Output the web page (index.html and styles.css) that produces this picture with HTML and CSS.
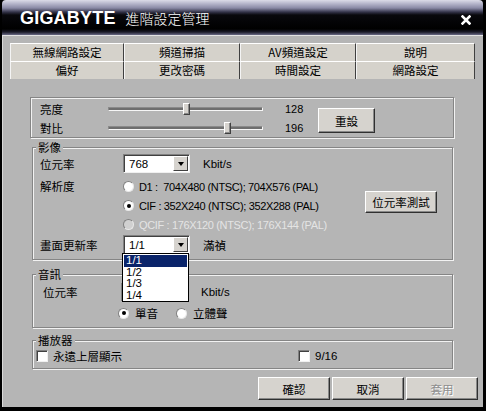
FILE: index.html
```html
<!DOCTYPE html>
<html lang="zh-Hant">
<head>
<meta charset="utf-8">
<title>進階設定管理</title>
<link rel="stylesheet" href="styles.css">
</head>
<body>
<div class="window">
  <div class="titlebar">
    <span class="brand">GIGABYTE</span>
    <span class="title">進階設定管理</span>
    <svg class="close" width="10" height="10" viewBox="0 0 10 10"><path d="M1.5 1.5 L8.5 8.5 M8.5 1.5 L1.5 8.5" stroke="#fff" stroke-width="2.6" stroke-linecap="square"/></svg>
  </div>
  <div class="client">
    <div class="tabs">
      <div class="tabrow back">
        <div class="tab w1">無線網路設定</div>
        <div class="tab w2">頻道掃描</div>
        <div class="tab w3">AV頻道設定</div>
        <div class="tab w4">說明</div>
      </div>
      <div class="tabrow front">
        <div class="tab w1 active">偏好</div>
        <div class="tab w2">更改密碼</div>
        <div class="tab w3">時間設定</div>
        <div class="tab w4">網路設定</div>
      </div>
    </div>

    <div class="page">
      <fieldset class="group adjust">
        <div class="adjust-grid">
          <span class="lbl">亮度</span>
          <div class="slider"><div class="track"></div><div class="thumb" style="left:50.2%"></div></div>
          <span class="val">128</span>
          <div class="btn reset">重設</div>
          <span class="lbl">對比</span>
          <div class="slider"><div class="track"></div><div class="thumb" style="left:76.9%"></div></div>
          <span class="val">196</span>
        </div>
      </fieldset>

      <fieldset class="group video">
        <legend>影像</legend>
        <div class="gbody">
          <div class="row rate">
            <span class="lbl">位元率</span>
            <div class="select"><span class="sel-text">768</span><span class="sel-btn"><i class="tri"></i></span></div>
            <span class="unit">Kbit/s</span>
          </div>
          <div class="res">
            <span class="lbl res-lbl">解析度</span>
            <div class="radios">
              <div class="opt"><span class="radio"></span><span>D1 :&nbsp; 704X480 (NTSC); 704X576 (PAL)</span></div>
              <div class="opt"><span class="radio checked"></span><span>CIF : 352X240 (NTSC); 352X288 (PAL)</span></div>
              <div class="opt disabled"><span class="radio"></span><span>QCIF : 176X120 (NTSC); 176X144 (PAL)</span></div>
            </div>
            <div class="btn test">位元率測試</div>
          </div>
          <div class="row fps">
            <span class="lbl">畫面更新率</span>
            <div class="select open">
              <span class="sel-text">1/1</span><span class="sel-btn"><i class="tri"></i></span>
              <ul class="listbox">
                <li class="hl">1/1</li>
                <li>1/2</li>
                <li>1/3</li>
                <li>1/4</li>
              </ul>
            </div>
            <span class="unit">滿禎</span>
          </div>
        </div>
      </fieldset>

      <fieldset class="group audio">
        <legend>音訊</legend>
        <div class="gbody">
          <div class="row arate">
            <span class="lbl">位元率</span>
            <div class="select"><span class="sel-text"></span><span class="sel-btn"><i class="tri"></i></span></div>
            <span class="unit">Kbit/s</span>
          </div>
          <div class="row mode">
            <div class="opt"><span class="radio checked"></span><span>單音</span></div>
            <div class="opt"><span class="radio"></span><span>立體聲</span></div>
          </div>
        </div>
      </fieldset>

      <fieldset class="group player">
        <legend>播放器</legend>
        <div class="gbody">
          <div class="row checks">
            <div class="opt"><span class="check"></span><span>永遠上層顯示</span></div>
            <div class="opt ratio"><span class="check"></span><span>9/16</span></div>
          </div>
        </div>
      </fieldset>
    </div>

    <div class="actions">
      <div class="btn act">確認</div>
      <div class="btn act">取消</div>
      <div class="btn act dis">套用</div>
    </div>
  </div>
</div>
</body>
</html>
```

FILE: styles.css
```css
* { box-sizing: border-box; }

html, body {
  margin: 0;
  padding: 0;
  background: #000;
}

body {
  font-family: "Liberation Sans", "Noto Sans CJK TC", sans-serif;
  font-size: 11px;
  color: #000;
}

.window {
  width: 486px;
  height: 411px;
  background: #000;
  padding: 0 3px 4px 2px;
  display: flex;
  flex-direction: column;
}

/* ---------- title bar ---------- */
.titlebar {
  height: 35px;
  flex: none;
  display: flex;
  align-items: center;
  padding: 1px 12px 0 18px;
  border-radius: 4px 4px 0 0;
  background: linear-gradient(to bottom,
    #dcdce8 0px, #bcbcd0 3px, #8a8aa6 8px, #34344a 12px,
    #08080c 15px, #000 29px, #1c1c2a 32px, #6a6a86 35px);
}

.brand {
  font-family: "Liberation Sans", sans-serif;
  font-weight: bold;
  font-size: 18px;
  color: #fff;
  letter-spacing: 0.2px;
}

.title {
  margin-left: 10px;
  font-family: "Noto Sans CJK TC", sans-serif;
  font-size: 14px;
  font-weight: 300;
  color: #fff;
}

.close { margin-left: auto; margin-top: 3px; }

/* ---------- client ---------- */
.client {
  flex: 1;
  background: #b5b5b5;
  border-top: 1px solid #e2e2e2;
  border-left: 1px solid #d8d8d8;
  display: flex;
  flex-direction: column;
}

.tabs {
  margin: 7px 0 0 7px;
  width: 465px;
}

.tabrow {
  display: flex;
  height: 18px;
}

.tab {
  background: #d5d2cb;
  border-top: 1px solid #fff;
  border-left: 1px solid #f4f4f4;
  border-right: 1px solid #404040;
  font-family: "Noto Sans CJK TC", sans-serif;
  font-size: 11.5px;
  line-height: 16px;
  text-align: center;
}

.w1 { width: 114px; }
.w2 { width: 116px; }
.w3 { width: 116px; }
.w4 { width: 119px; }

/* ---------- page ---------- */
.page {
  display: flex;
  flex-direction: column;
}

.lbl, .unit, legend, .btn {
  font-family: "Noto Sans CJK TC", sans-serif;
  font-size: 11.5px;
}

.group {
  margin: 0;
  padding: 0;
  min-width: 0;
  border: 1px solid #858585;
  box-shadow: 1px 1px 0 #f2f2f2, inset 1px 1px 0 #f2f2f2;
}

legend {
  padding: 0 2px;
  margin-left: 3px;
  line-height: 12px;
  background: #b5b5b5;
}

.adjust {
  margin: 18px 0 0 27px;
  width: 424px;
}

.video, .audio, .player {
  margin-left: 29px;
  width: 421px;
}

.video { margin-top: 3px; }
.audio { margin-top: 8px; }
.player { margin-top: 6px; }

/* adjust group */
.adjust-grid {
  display: grid;
  grid-template-columns: 68px 155px 55px 57px;
  grid-template-rows: 18px 18px;
  row-gap: 1px;
  padding: 2px 0 0 9px;
  align-items: center;
}

.slider {
  position: relative;
  height: 18px;
}

.track {
  position: absolute;
  left: 0;
  right: 0;
  top: 7px;
  height: 4px;
  background: #6e6e6e;
  border-top: 1px solid #8a8a8a;
  border-left: 1px solid #8a8a8a;
  border-bottom: 1px solid #f6f6f6;
  border-right: 1px solid #f6f6f6;
}

.thumb {
  position: absolute;
  top: 3px;
  width: 7px;
  height: 12px;
  margin-left: -3px;
  background: #d6d3ce;
  border-top: 1px solid #fff;
  border-left: 1px solid #fff;
  border-right: 1px solid #404040;
  border-bottom: 1px solid #404040;
  box-shadow: inset -1px -1px 0 #8a8a8a;
}

.val {
  padding-left: 22px;
  font-size: 11px;
}

.reset {
  grid-column: 4;
  grid-row: 1 / span 2;
  align-self: start;
  margin-top: 8px;
  width: 57px;
  height: 25px;
}

/* buttons */
.btn {
  display: flex;
  align-items: center;
  justify-content: center;
  background: #d6d3ce;
  border-top: 1px solid #fff;
  border-left: 1px solid #fff;
  border-right: 1px solid #303030;
  border-bottom: 1px solid #303030;
  box-shadow: inset -1px -1px 0 #888;
}

/* video group */
.gbody {
  display: flex;
  flex-direction: column;
}

.video .gbody { padding: 1px 0 5px 7px; }

.row {
  display: flex;
  align-items: center;
}

.video .lbl { width: 83px; flex: none; }

.rate, .fps { height: 19px; }
.fps { margin-top: 1px; }

.unit { margin-left: 13px; }
.rate .unit, .arate .unit { font-family: "Liberation Sans", sans-serif; font-size: 11.5px; }

.select {
  position: relative;
  width: 67px;
  height: 19px;
  flex: none;
  display: flex;
  background: #fff;
  border-top: 1px solid #808080;
  border-left: 1px solid #808080;
  border-right: 1px solid #f0f0f0;
  border-bottom: 1px solid #f0f0f0;
  box-shadow: inset 1px 1px 0 #404040;
}

.sel-text {
  flex: 1;
  padding: 2px 0 0 5px;
  font-size: 11.5px;
  line-height: 14px;
}

.sel-btn {
  width: 15px;
  margin: 1px 1px 1px 0;
  background: #d6d3ce;
  border-top: 1px solid #fff;
  border-left: 1px solid #fff;
  border-right: 1px solid #404040;
  border-bottom: 1px solid #404040;
  display: flex;
  align-items: center;
  justify-content: center;
}

.tri {
  width: 0;
  height: 0;
  border-left: 3.5px solid transparent;
  border-right: 3.5px solid transparent;
  border-top: 4px solid #000;
}

.listbox {
  position: absolute;
  left: -2px;
  top: 17px;
  width: 67px;
  margin: 0;
  padding: 1px 1px 0 1px;
  list-style: none;
  background: #fff;
  border: 1px solid #000;
  z-index: 5;
}

.listbox li {
  height: 11.5px;
  line-height: 11.5px;
  padding-left: 2px;
  font-size: 11.5px;
}

.listbox li.hl {
  background: #0a246a;
  color: #fff;
}

.res {
  display: flex;
  margin-top: 4px;
}

.res-lbl { line-height: 19px; }

.radios {
  display: flex;
  flex-direction: column;
  width: 242px;
}

.opt {
  display: flex;
  align-items: center;
  height: 19px;
  white-space: nowrap;
}

.radios .opt span:last-child {
  margin-left: 5px;
  letter-spacing: -0.35px;
}

.radio {
  width: 11px;
  height: 11px;
  flex: none;
  border-radius: 50%;
  background: #fff;
  border-top: 1px solid #808080;
  border-left: 1px solid #808080;
  border-bottom: 1px solid #e8e8e8;
  border-right: 1px solid #e8e8e8;
  display: flex;
  align-items: center;
  justify-content: center;
}

.radio.checked::after {
  content: "";
  width: 4px;
  height: 4px;
  border-radius: 50%;
  background: #000;
}

.disabled { color: #e4e4e4; }
.disabled .radio { background: #d0d0d0; }

.test {
  width: 72px;
  height: 22px;
  margin: 14px 0 0 0;
}

/* audio */
.audio .gbody { padding: 1px 0 5px 10px; }
.arate { height: 20px; margin-top: 1px; }
.arate .lbl { width: 78px; }
.mode { height: 18px; margin: 2px 0 0 75px; }
.mode .opt span:last-child { margin-left: 6px; font-family: "Noto Sans CJK TC", sans-serif; font-size: 11.5px; }
.mode .opt + .opt { margin-left: 18px; }

/* player */
.player .gbody { padding: 3px 0 5px 3px; }
.checks { height: 14px; }
.check {
  width: 12px;
  height: 12px;
  flex: none;
  background: #fff;
  border-top: 1px solid #808080;
  border-left: 1px solid #808080;
  border-bottom: 1px solid #f0f0f0;
  border-right: 1px solid #f0f0f0;
  box-shadow: inset 1px 1px 0 #404040;
}
.checks .opt { height: 14px; }
.checks .opt span:last-child { margin-left: 5px; font-family: "Noto Sans CJK TC", sans-serif; font-size: 11.5px; }
.checks .ratio { margin-left: 176px; }
.checks .ratio span:last-child { font-family: "Liberation Sans", sans-serif; font-size: 11.5px; }

/* actions */
.actions {
  display: flex;
  justify-content: flex-end;
  gap: 2px;
  margin-top: 8px;
  padding-right: 5px;
}

.act {
  width: 72px;
  height: 23px;
}

.act.dis {
  color: #8e8e8e;
  text-shadow: 1px 1px 0 #fff;
}
```
